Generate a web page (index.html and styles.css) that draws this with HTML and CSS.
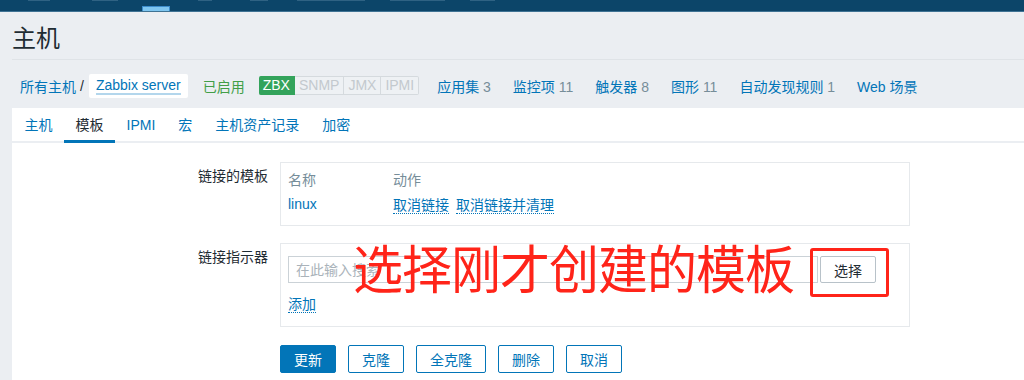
FILE: index.html
```html
<!DOCTYPE html>
<html lang="zh-CN">
<head>
  <meta charset="UTF-8" />
  <title>主机 - Zabbix</title>
  <link rel="stylesheet" href="styles.css">
</head>
<body>
  <nav class="topbar">
    <span class="top-item" style="width:22px;margin-left:28px"></span>
    <span class="top-item" style="width:26px;margin-left:42px"></span>
    <span class="top-item active" style="width:28px;margin-left:24px"></span>
    <span class="top-item" style="width:14px;margin-left:28px"></span>
    <span class="top-item" style="width:18px;margin-left:38px"></span>
    <span class="top-item" style="width:68px;margin-left:29px"></span>
    <span class="top-item" style="width:55px;margin-left:25px"></span>
    <span class="top-item" style="width:25px;margin-left:25px"></span>
  </nav>

  <header class="page-header">
    <h1>主机</h1>
  </header>

  <div class="breadcrumbs">
    <a class="crumb">所有主机</a>
    <span class="sep">/</span>
    <a class="crumb current"><span>Zabbix server</span></a>
    <span class="status">已启用</span>
    <span class="badges">
      <span class="badge on">ZBX</span><span class="badge">SNMP</span><span class="badge">JMX</span><span class="badge">IPMI</span>
    </span>
    <a class="crumb">应用集 <em>3</em></a>
    <a class="crumb">监控项 <em>11</em></a>
    <a class="crumb">触发器 <em>8</em></a>
    <a class="crumb">图形 <em>11</em></a>
    <a class="crumb">自动发现规则 <em>1</em></a>
    <a class="crumb">Web 场景</a>
  </div>

  <div class="panel">
    <ul class="tabs">
      <li>主机</li>
      <li class="active">模板</li>
      <li>IPMI</li>
      <li>宏</li>
      <li>主机资产记录</li>
      <li>加密</li>
    </ul>

    <div class="form">
      <label class="form-label">链接的模板</label>
      <div class="box">
        <table class="linked">
          <tr><th class="col-name">名称</th><th>动作</th></tr>
          <tr>
            <td class="col-name"><a class="plain">linux</a></td>
            <td><a class="dotted">取消链接</a> <a class="dotted">取消链接并清理</a></td>
          </tr>
        </table>
      </div>

      <label class="form-label">链接指示器</label>
      <div class="box picker">
        <div class="picker-row">
          <input type="text" placeholder="在此输入搜索">
          <button class="btn-grey">选择</button>
        </div>
        <a class="dotted add">添加</a>
        <div class="note">选择刚才创建的模板</div>
        <div class="note-box"></div>
      </div>

      <div></div>
      <div class="actions">
        <button class="btn primary">更新</button>
        <button class="btn">克隆</button>
        <button class="btn">全克隆</button>
        <button class="btn">删除</button>
        <button class="btn">取消</button>
      </div>
    </div>
  </div>
</body>
</html>
```

FILE: styles.css
```css
body {
  margin: 0;
  background: #ebeef2;
  font-family: "Liberation Sans", "Noto Sans CJK SC", sans-serif;
  font-size: 14px;
  color: #1f2c33;
  overflow: hidden;
}

a {
  color: #0275b8;
  text-decoration: none;
}

/* top menu, mostly cut off */
.topbar {
  height: 11px;
  background: #0c4569;
  border-bottom: 1px solid #3f7394;
  display: flex;
  align-items: flex-start;
}

.top-item {
  height: 1px;
  background: #2f6283;
}

.top-item.active {
  height: 5px;
  margin-top: 6px;
  background: #7fc6f0;
  box-sizing: border-box;
  border: 1px solid #3c8ccb;
  border-bottom: none;
}

.page-header {
  margin-left: 12px;
  height: 47px;
  border-bottom: 1px solid #dfe3e7;
  display: flex;
  align-items: center;
}

.page-header h1 {
  margin: 2px 0 0;
  font-size: 24px;
  font-weight: 400;
  color: #1f2c33;
}

.breadcrumbs {
  margin-left: 20px;
  height: 43px;
  padding-top: 4px;
  display: flex;
  align-items: center;
  white-space: nowrap;
}

.crumb {
  margin-right: 22px;
}

.crumb em {
  font-style: normal;
  color: #768d99;
}

.sep {
  margin: 0 5px 0 -18px;
  color: #1f2c33;
}

.crumb.current {
  background: #fff;
  padding: 3px 7px 3px;
  margin-right: 15px;
  line-height: 17px;
  border-radius: 2px;
}

.crumb.current span {
  display: inline-block;
  border-bottom: 2px solid #b3d6ec;
  line-height: 16px;
}

.status {
  color: #429e47;
  margin-right: 14px;
}

.badges {
  display: flex;
  margin-right: 18px;
}

.badge {
  height: 17px;
  line-height: 17px;
  padding: 0 4px;
  border: 1px solid #d5dade;
  border-left: none;
  color: #c3c9ce;
  background: #eef1f4;
}

.badge.on {
  background: #33a35b;
  border-color: #33a35b;
  color: #fff;
  border-radius: 2px 0 0 2px;
}

.badge:last-child {
  border-radius: 0 2px 2px 0;
}

/* white panel */
.panel {
  margin-left: 12px;
  margin-top: 1px;
  background: #fff;
  height: 300px;
}

.tabs {
  list-style: none;
  margin: 0;
  padding: 0 0 0 1px;
  display: flex;
  border-bottom: 2px solid #ebeef2;
}

.tabs li {
  padding: 7px 11.5px 0;
  height: 25px;
  line-height: 20px;
  color: #0275b8;
  border-bottom: 3px solid transparent;
  margin-bottom: -2px;
}

.tabs li.active {
  color: #1f2c33;
  border-bottom-color: #0275b8;
}

.form {
  display: grid;
  grid-template-columns: 256px 630px;
  column-gap: 12px;
  row-gap: 17px;
  padding-top: 19px;
}

.form-label {
  text-align: right;
  padding-top: 5px;
  line-height: 18px;
  color: #1f2c33;
}

.box {
  border: 1px solid #e6e9ec;
  padding: 3px 7px 9px;
}

.linked {
  border-collapse: collapse;
}

.linked th,
.linked td {
  height: 25px;
  padding: 0;
  text-align: left;
  font-weight: 400;
  white-space: nowrap;
}

.linked th {
  color: #768d99;
}

.col-name {
  width: 105px;
}

.dotted {
  border-bottom: 1px dotted #0275b8;
  margin-right: 3px;
}

.picker {
  position: relative;
  padding: 12px 7px 13px;
}

.picker-row {
  display: flex;
  gap: 2px;
  margin-bottom: 12px;
}

.picker input {
  width: 530px;
  height: 27px;
  box-sizing: border-box;
  border: 1px solid #cbd2d7;
  padding: 0 7px;
  font: inherit;
  font-size: 14px;
}

.picker input::placeholder {
  color: #aab3ba;
}

.btn-grey {
  width: 56px;
  height: 27px;
  background: #fff;
  border: 1px solid #b8c2c9;
  border-radius: 2px;
  font: inherit;
  color: #1f2c33;
}

.add {
  line-height: 18px;
}

.note {
  position: absolute;
  left: 72px;
  top: -3px;
  font-size: 50px;
  line-height: 60px;
  color: #ff2419;
  white-space: nowrap;
  letter-spacing: -1px;
  transform: scaleY(1.04);
}

.note-box {
  position: absolute;
  left: 529px;
  top: 4px;
  width: 79px;
  height: 49px;
  box-sizing: border-box;
  border: 3px solid #ff2419;
  border-radius: 3px;
}

.actions {
  display: flex;
  gap: 12px;
  margin-top: 1px;
}

.btn {
  height: 28px;
  padding: 0 13px;
  background: #fff;
  border: 1px solid #0275b8;
  border-radius: 2px;
  color: #0275b8;
  font: inherit;
}

.btn.primary {
  background: #0275b8;
  color: #fff;
}
```
